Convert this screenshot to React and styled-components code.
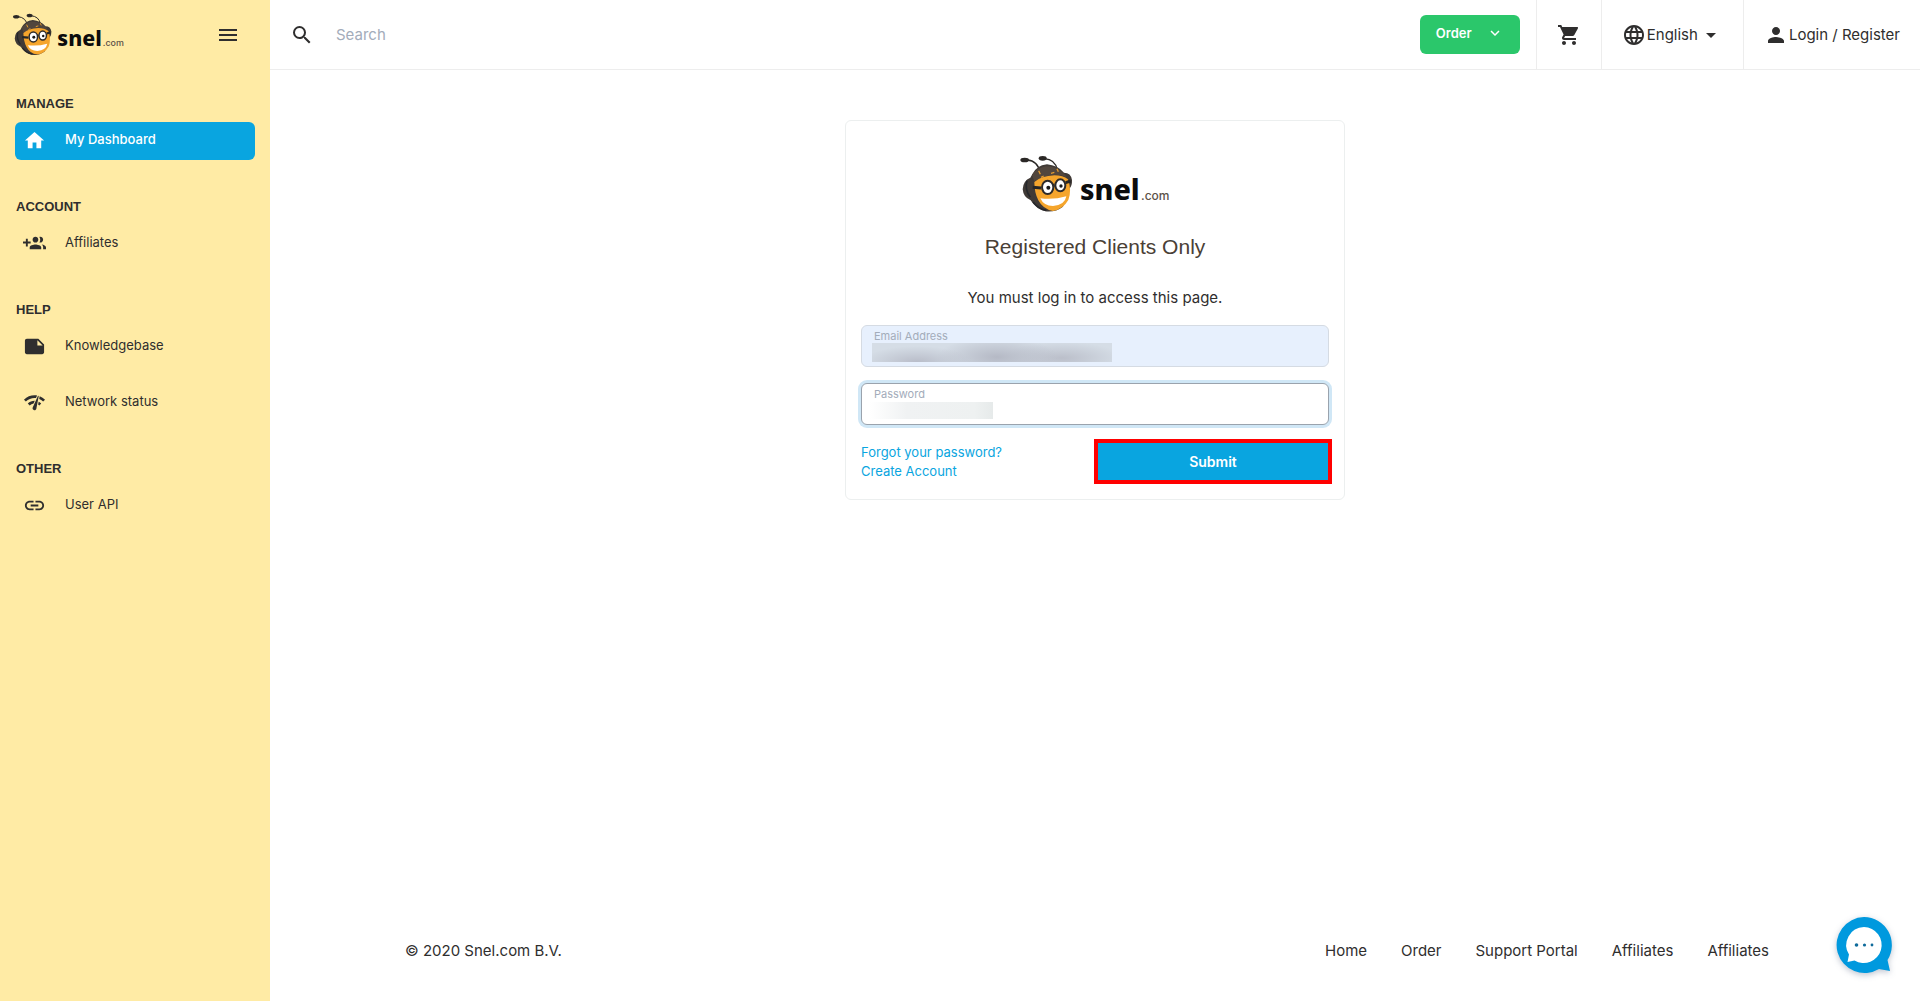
import React from "react";
import styled, { createGlobalStyle } from "styled-components";
import {
  MdMenu,
  MdHome,
  MdNote,
  MdNetworkCheck,
  MdLink,
  MdSearch,
  MdShoppingCart,
  MdLanguage,
  MdPerson,
  MdArrowDropDown,
  MdKeyboardArrowDown,
} from "react-icons/md";

const colors = {
  ink: "#2f2e2e",
  sidebar: "#ffeba5",
  blue: "#09a5e0",
  green: "#2bc76b",
  line: "#ededed",
  muted: "#a3acba",
};

const GlobalStyle = createGlobalStyle`
  *, *::before, *::after { box-sizing: border-box; }
  body {
    margin: 0;
    background: #fff;
    color: ${colors.ink};
    font: 400 15px/20px Inter, "Liberation Sans", sans-serif;
  }
  a { color: inherit; text-decoration: none; }
  button, input { font: inherit; color: inherit; }
  button { border: 0; background: none; padding: 0; cursor: pointer; }
  svg { display: block; flex: none; }
`;

const Page = styled.div`
  display: grid;
  grid-template-columns: 270px minmax(0, 1fr);
  min-height: 100vh;
`;

const Sidebar = styled.aside`
  background: ${colors.sidebar};
`;

const SidebarTop = styled.div`
  display: flex;
  align-items: center;
  justify-content: space-between;
  height: 70px;
  padding: 0 30px 0 12px;
`;

const SidebarNav = styled.nav`
  display: flex;
  flex-direction: column;
  gap: 39px;
  padding: 26px 15px;
`;

const SectionTitle = styled.h2`
  margin: 0 0 10px 1px;
  font: 700 13px/16px "Liberation Sans", Arial, sans-serif;
`;

const SectionList = styled.ul`
  display: flex;
  flex-direction: column;
  gap: 18px;
  margin: 0;
  padding: 0;
  list-style: none;
`;

const SideLink = styled.a`
  display: flex;
  align-items: center;
  gap: 19px;
  height: 38px;
  padding: 0 8px 2px;
  border-radius: 6px;
  font-size: 13px;
  font-weight: ${(p) => (p.$active ? 500 : 400)};
  color: ${(p) => (p.$active ? "#fff" : colors.ink)};
  background: ${(p) => (p.$active ? colors.blue : "transparent")};

  span { padding-bottom: 3px; }
`;

const Content = styled.div`
  display: flex;
  flex-direction: column;
`;

const Header = styled.header`
  display: flex;
  height: 70px;
  border-bottom: 1px solid ${colors.line};
`;

const SearchBar = styled.label`
  display: flex;
  flex: 1;
  align-items: center;
  gap: 22px;
  padding-left: 20px;
`;

const SearchInput = styled.input`
  flex: 1;
  padding: 1px 0 0;
  border: 0;
  outline: 0;
  background: none;
  &::placeholder { color: ${colors.muted}; opacity: 1; }
`;

const OrderCell = styled.div`
  display: flex;
  align-items: center;
  padding: 0 16px;
`;

const OrderButton = styled.button`
  display: flex;
  align-items: center;
  justify-content: space-between;
  width: 100px;
  height: 39px;
  padding: 0 16px 3px;
  border-radius: 6px;
  background: ${colors.green};
  color: #fff;
  font-size: 13px;
  font-weight: 600;
`;

const HeaderCell = styled.a`
  display: flex;
  align-items: center;
  gap: 1px;
  padding: 0 20px;
  border-left: 1px solid ${colors.line};
`;

const Main = styled.main`
  flex: 1;
  padding: 50px 20px;
`;

const Card = styled.form`
  display: flex;
  flex-direction: column;
  max-width: 500px;
  margin: 0 auto;
  padding: 34px 15px 18px;
  border: 1px solid #ecefef;
  border-radius: 6px;
`;

const CardLogo = styled.div`
  display: flex;
  justify-content: center;
`;

const CardTitle = styled.h1`
  margin: 22px 0 0;
  font: 400 21px/24px "Liberation Sans", Arial, sans-serif;
  text-align: center;
  color: #4a4036;
`;

const CardText = styled.p`
  margin: 29px 0 17px;
  text-align: center;
`;

const Field = styled.div`
  position: relative;
  margin-bottom: 16px;
`;

const FieldLabel = styled.label`
  position: absolute;
  top: 5px;
  left: 13px;
  font-size: 11px;
  line-height: 12px;
  color: ${colors.muted};
`;

const FieldInput = styled.input`
  display: block;
  width: 100%;
  height: 42px;
  padding: 16px 12px 4px;
  border: 1px solid ${(p) => (p.$focused ? "#9aa3ad" : "#d5dbe3")};
  border-radius: 6px;
  outline: 0;
  background: ${(p) => (p.$filled ? "#e7f0fd" : "#fff")};
  box-shadow: ${(p) => (p.$focused ? "0 0 0 3px #d0e7f6" : "none")};
`;

const HiddenEmail = styled.span`
  position: absolute;
  top: 18px;
  left: 11px;
  width: 240px;
  height: 19px;
  background:
    radial-gradient(ellipse 55px 16px at 45px 19px, #b9bdc9, transparent),
    radial-gradient(ellipse 60px 20px at 125px 14px, #b5b9c5, transparent),
    radial-gradient(ellipse 60px 16px at 190px 15px, #bbbfca, transparent),
    #d5dde6;
`;

const HiddenPassword = styled.span`
  position: absolute;
  top: 19px;
  left: 9px;
  width: 123px;
  height: 17px;
  background: linear-gradient(90deg, #fff, #f0f2f3 30%, #eef1f1 85%, #e6eaea);
`;

const CardActions = styled.div`
  display: grid;
  grid-template-columns: 1fr 230px;
  align-items: start;
  padding: 2px 1px 0 0;
`;

const CardLinks = styled.div`
  display: flex;
  flex-direction: column;
  align-items: flex-start;
  font-size: 13px;
  line-height: 19px;
  color: ${colors.blue};
`;

const SubmitButton = styled.button`
  height: 37px;
  background: ${colors.blue};
  outline: 4px solid #f00;
  color: #fff;
  font-size: 14px;
  font-weight: 600;
`;

const Footer = styled.footer`
  display: flex;
  justify-content: space-between;
  width: 100%;
  max-width: 1380px;
  margin: 0 auto;
  padding: 0 16px 40px 0;
`;

const FooterLinks = styled.nav`
  display: flex;
  gap: 34px;
`;

const ChatButton = styled.button`
  position: fixed;
  right: 28px;
  bottom: 28px;
  filter: drop-shadow(0 2px 3px rgba(40, 60, 100, 0.3));
`;

function AddPeopleIcon({ size }) {
  return (
    <svg width={size} height={size} viewBox="0 0 24 24" fill="currentColor" aria-hidden="true">
      <path d="M8 10H5V7H3v3H0v2h3v3h2v-3h3v-2zm10 1c1.660 0 2.990-1.340 2.990-3S19.660 5 18 5c-.32 0-.63.05-.91.14.57.81.9 1.790.9 2.860s-.34 2.040-.9 2.860c.28.09.59.14.91.14zm-5 0c1.660 0 2.990-1.340 2.990-3S14.660 5 13 5s-3 1.340-3 3 1.340 3 3 3zm6.620 2.160c.83.73 1.380 1.660 1.380 2.840v2h3v-2c0-1.540-2.370-2.490-4.380-2.840zM13 13c-2 0-6 1-6 3v2h12v-2c0-2-4-3-6-3z" />
    </svg>
  );
}

function Logo({ width }) {
  return (
    <svg width={width} viewBox="58 45 456 174" role="img" aria-label="snel.com">
      <path d="M82 60Q115 62 121 98M134 56Q167 58 173 90" fill="none" stroke="#2b2826" strokeWidth="4" />
      <ellipse cx="75" cy="60" rx="13" ry="7" fill="#2b2826" />
      <ellipse cx="129" cy="55" rx="12" ry="7" fill="#2b2826" />
      <path d="M97 104Q110 76 142 73Q174 76 193 98Q214 98 217 120Q218 138 208 148L190 200Q166 218 137 214Q110 208 93 181Q71 172 69 148Q70 122 92 113Z" fill="#403a36" />
      <path d="M97 104Q112 84 138 79Q168 79 187 96Q196 103 202 112Q160 92 104 124Z" fill="#51463d" />
      <path d="M82 122Q74 148 92 172M100 186Q118 208 140 211" fill="none" stroke="#25272b" strokeWidth="5" />
      <path d="M104 126Q124 108 164 106Q190 106 205 118Q217 152 206 180Q190 208 160 213Q130 208 116 181Q104 158 104 126Z" fill="#f5a52c" />
      <path d="M117 92l5 11M172 86l4 9M154 100l10 -3M132 108l-8 4" stroke="#e49b2f" strokeWidth="4" />
      <path d="M99 142L124 144M158 137l7-2M198 128l15-5" stroke="#262626" strokeWidth="9" />
      <ellipse cx="144" cy="142" rx="17" ry="20" fill="#fff" stroke="#2d2b2a" strokeWidth="6" />
      <ellipse cx="182" cy="136" rx="15" ry="18" fill="#fff" stroke="#2d2b2a" strokeWidth="6" />
      <circle cx="146" cy="143" r="6" fill="#191919" />
      <circle cx="184" cy="138" r="5" fill="#191919" />
      <path d="M122 175Q162 180 200 169Q196 195 160 198Q132 198 122 175Z" fill="#fff" />
      <text x="241" y="179" fontFamily="'Noto Sans', 'Open Sans', sans-serif" fontWeight="800" fontSize="86" fill="#0c0c0c">snel</text>
      <text x="424" y="179" fontFamily="Inter, sans-serif" fontWeight="500" fontSize="36" fill="#5b5148">.com</text>
    </svg>
  );
}

const sections = [
  { title: "MANAGE", items: [{ label: "My Dashboard", icon: MdHome, active: true }] },
  { title: "ACCOUNT", items: [{ label: "Affiliates", icon: AddPeopleIcon }] },
  {
    title: "HELP",
    items: [
      { label: "Knowledgebase", icon: MdNote },
      { label: "Network status", icon: MdNetworkCheck },
    ],
  },
  { title: "OTHER", items: [{ label: "User API", icon: MdLink }] },
];

const footerLinks = ["Home", "Order", "Support Portal", "Affiliates", "Affiliates"];

export default function App() {
  return (
    <>
      <GlobalStyle />
      <Page>
        <Sidebar>
          <SidebarTop>
            <a href="#home"><Logo width={113} /></a>
            <button type="button" aria-label="Toggle menu"><MdMenu size={24} /></button>
          </SidebarTop>
          <SidebarNav>
            {sections.map((section) => (
              <section key={section.title}>
                <SectionTitle>{section.title}</SectionTitle>
                <SectionList>
                  {section.items.map(({ label, icon: Icon, active }) => (
                    <li key={label}>
                      <SideLink href="#" $active={active}>
                        <Icon size={23} />
                        <span>{label}</span>
                      </SideLink>
                    </li>
                  ))}
                </SectionList>
              </section>
            ))}
          </SidebarNav>
        </Sidebar>

        <Content>
          <Header>
            <SearchBar>
              <MdSearch size={24} />
              <SearchInput type="search" placeholder="Search" aria-label="Search" />
            </SearchBar>
            <OrderCell>
              <OrderButton type="button">
                Order
                <MdKeyboardArrowDown size={18} />
              </OrderButton>
            </OrderCell>
            <HeaderCell href="#cart" aria-label="Cart"><MdShoppingCart size={24} /></HeaderCell>
            <HeaderCell href="#language">
              <MdLanguage size={24} />
              English
              <MdArrowDropDown size={24} />
            </HeaderCell>
            <HeaderCell href="#login">
              <MdPerson size={24} />
              Login / Register
            </HeaderCell>
          </Header>

          <Main>
            <Card>
              <CardLogo><Logo width={152} /></CardLogo>
              <CardTitle>Registered Clients Only</CardTitle>
              <CardText>You must log in to access this page.</CardText>
              <Field>
                <FieldInput id="email" type="email" $filled />
                <FieldLabel htmlFor="email">Email Address</FieldLabel>
                <HiddenEmail />
              </Field>
              <Field>
                <FieldInput id="password" type="password" $focused />
                <FieldLabel htmlFor="password">Password</FieldLabel>
                <HiddenPassword />
              </Field>
              <CardActions>
                <CardLinks>
                  <a href="#forgot">Forgot your password?</a>
                  <a href="#create">Create Account</a>
                </CardLinks>
                <SubmitButton type="submit">Submit</SubmitButton>
              </CardActions>
            </Card>
          </Main>

          <Footer>
            <span>© 2020 Snel.com B.V.</span>
            <FooterLinks>
              {footerLinks.map((label, i) => (
                <a href="#" key={i}>{label}</a>
              ))}
            </FooterLinks>
          </Footer>
        </Content>
      </Page>

      <ChatButton type="button" aria-label="Open chat">
        <svg width="56" height="56" viewBox="0 0 56 56">
          <path d="M28 0a28 28 0 1 0 15 52l11 2-2.500-11A28 28 0 0 0 28 0Z" fill="#0099de" />
          <path d="M28 10a18 18 0 0 0-15 27.500L11.500 45l7-1.500A18 18 0 1 0 28 10Z" fill="#fff" />
          <circle cx="20.500" cy="28" r="1.800" fill="#0f6b9b" />
          <circle cx="28.500" cy="28" r="1.600" fill="#0f6b9b" />
          <circle cx="36" cy="28" r="1.400" fill="#0f6b9b" />
        </svg>
      </ChatButton>
    </>
  );
}
